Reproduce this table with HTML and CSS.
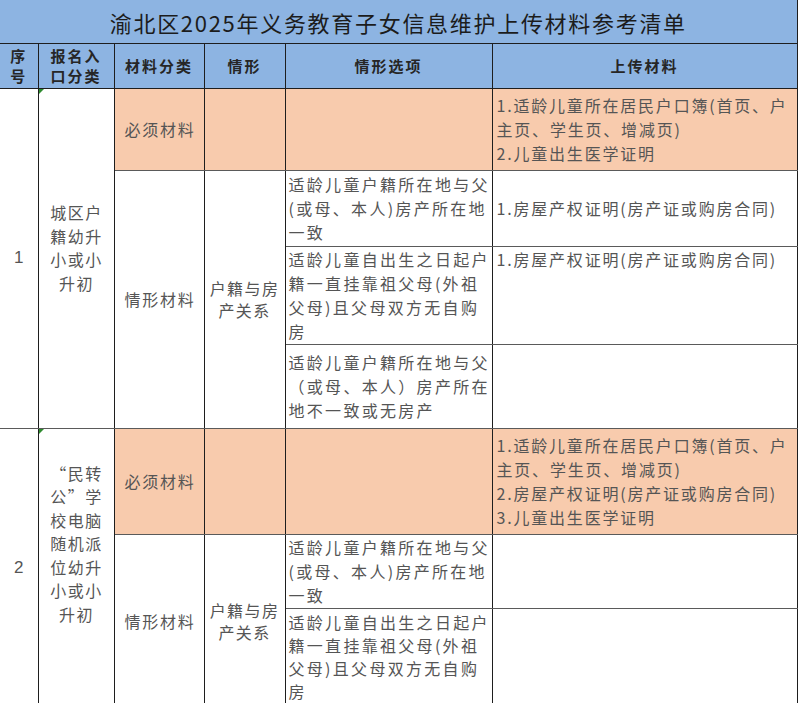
FILE: index.html
```html
<!DOCTYPE html>
<html lang="zh-CN">
<head>
<meta charset="utf-8">
<title>渝北区2025年义务教育子女信息维护上传材料参考清单</title>
<link rel="stylesheet" href="styles.css">
</head>
<body>
<table class="sheet">
  <colgroup>
    <col class="c1"><col class="c2"><col class="c3"><col class="c4"><col class="c5"><col class="c6">
  </colgroup>
  <tr class="r-title">
    <td colspan="6" class="title">渝北区2025年义务教育子女信息维护上传材料参考清单</td>
  </tr>
  <tr class="r-head">
    <td class="head">序<br>号</td>
    <td class="head">报名入<br>口分类</td>
    <td class="head">材料分类</td>
    <td class="head">情形</td>
    <td class="head">情形选项</td>
    <td class="head">上传材料</td>
  </tr>

  <tr class="r1">
    <td rowspan="4" class="num">1</td>
    <td rowspan="4" class="cat flag"><div class="cat-text cat-a">城区户<br>籍幼升<br>小或小<br>升初</div></td>
    <td class="peach kind">必须材料</td>
    <td class="peach"></td>
    <td class="peach"></td>
    <td class="peach up">1.适龄儿童所在居民户口簿(首页、户<br>主页、学生页、增减页)<br>2.儿童出生医学证明</td>
  </tr>
  <tr class="r2">
    <td rowspan="3" class="kind">情形材料</td>
    <td rowspan="3" class="rel">户籍与房<br>产关系</td>
    <td class="sit">适龄儿童户籍所在地与父<br>(或母、本人)房产所在地<br>一致</td>
    <td class="up">1.房屋产权证明(房产证或购房合同)</td>
  </tr>
  <tr class="r3">
    <td class="sit">适龄儿童自出生之日起户<br>籍一直挂靠祖父母(外祖<br>父母)且父母双方无自购<br>房</td>
    <td class="up top">1.房屋产权证明(房产证或购房合同)</td>
  </tr>
  <tr class="r4">
    <td class="sit">适龄儿童户籍所在地与父<br>（或母、本人）房产所在<br>地不一致或无房产</td>
    <td class="up"></td>
  </tr>

  <tr class="r5">
    <td rowspan="3" class="num">2</td>
    <td rowspan="3" class="cat flag"><div class="cat-text cat-b"><span class="q ql">“</span>民转<br>公<span class="q qr">”</span>学<br>校电脑<br>随机派<br>位幼升<br>小或小<br>升初</div></td>
    <td class="peach kind">必须材料</td>
    <td class="peach"></td>
    <td class="peach"></td>
    <td class="peach up">1.适龄儿童所在居民户口簿(首页、户<br>主页、学生页、增减页)<br>2.房屋产权证明(房产证或购房合同)<br>3.儿童出生医学证明</td>
  </tr>
  <tr class="r6">
    <td rowspan="2" class="kind">情形材料</td>
    <td rowspan="2" class="rel">户籍与房<br>产关系</td>
    <td class="sit">适龄儿童户籍所在地与父<br>(或母、本人)房产所在地<br>一致</td>
    <td class="up"></td>
  </tr>
  <tr class="r7">
    <td class="sit sit-last">适龄儿童自出生之日起户<br>籍一直挂靠祖父母(外祖<br>父母)且父母双方无自购<br>房</td>
    <td class="up"></td>
  </tr>
</table>
</body>
</html>
```

FILE: styles.css
```css
html, body {
  margin: 0;
  padding: 0;
  background: #ffffff;
  overflow: hidden;
}

body {
  font-family: "Noto Sans CJK SC", "Noto Sans", sans-serif;
  color: #555555;
}

.sheet {
  table-layout: fixed;
  width: 797px;
  border-collapse: collapse;
}

.c1 { width: 38px; }
.c2 { width: 76px; }
.c3 { width: 90px; }
.c4 { width: 81px; }
.c5 { width: 207px; }
.c6 { width: 305px; }

.sheet td {
  border: 1px solid #1e1e1e;
  padding: 0;
  font-size: 16px;
  line-height: 24px;
  letter-spacing: 1.8px;
  vertical-align: middle;
  text-align: center;
  white-space: nowrap;
  overflow: hidden;
}

.sheet tr > td:first-child { border-left: 0; }

.r-title { height: 43px; }
.r-head { height: 45px; }
.r1 { height: 82px; }
.r2 { height: 76px; }
.r3 { height: 98px; }
.r4 { height: 84px; }
.r5 { height: 106px; }
.r6 { height: 74px; }
.r7 { height: 100px; }

.title {
  background: #8db4e2;
  border-top: 0 !important;
  font-size: 22px !important;
  letter-spacing: 1.7px !important;
  color: #1c1c1c;
  line-height: 30px !important;
  padding-top: 2px !important;
}

.head {
  background: #8db4e2;
  color: #262626;
  font-weight: 700;
  font-size: 15px !important;
  line-height: 20px !important;
  letter-spacing: 2px !important;
}

.peach { background: #f8cbad; }

.num {
  font-family: "Liberation Sans", "Noto Sans", sans-serif;
  font-size: 17px !important;
  color: #555;
  letter-spacing: 0 !important;
}

.cat { position: relative; }
.flag::before {
  content: "";
  position: absolute;
  left: 0;
  top: 0;
  border-top: 5px solid #2e8b2e;
  border-right: 5px solid transparent;
}

.cat-text {
  line-height: 23.5px;
  letter-spacing: 1.5px;
  padding-left: 1px;
}
.cat-a { padding-bottom: 20px; }
.cat-b { padding-bottom: 48px; }

.q {
  display: inline-block;
  width: 16px;
  letter-spacing: 0;
}
.ql { text-align: right; margin-right: 1.5px; }
.qr { text-align: left; margin-right: 1.5px; }

.kind { letter-spacing: 1.8px !important; padding-left: 2px !important; }
.rel { line-height: 22px !important; letter-spacing: 1.4px !important; }

.sit {
  text-align: left !important;
  padding-left: 3px !important;
  letter-spacing: 2.3px !important;
}

.sit-last {
  vertical-align: top !important;
  line-height: 23.2px !important;
  padding-top: 2px !important;
}

.up {
  text-align: left !important;
  padding-left: 4px !important;
  letter-spacing: 1.8px !important;
}

.top { vertical-align: top !important; }

.sheet .r1 td, .sheet .r2 td, .sheet .r3 td, .sheet .r4 td,
.sheet .r5 td, .sheet .r6 td, .sheet .r7 td {
  border-top-color: #5a5a5a;
  border-bottom-color: #5a5a5a;
}
.sheet .r1 td { border-top-color: #1e1e1e; }
```
